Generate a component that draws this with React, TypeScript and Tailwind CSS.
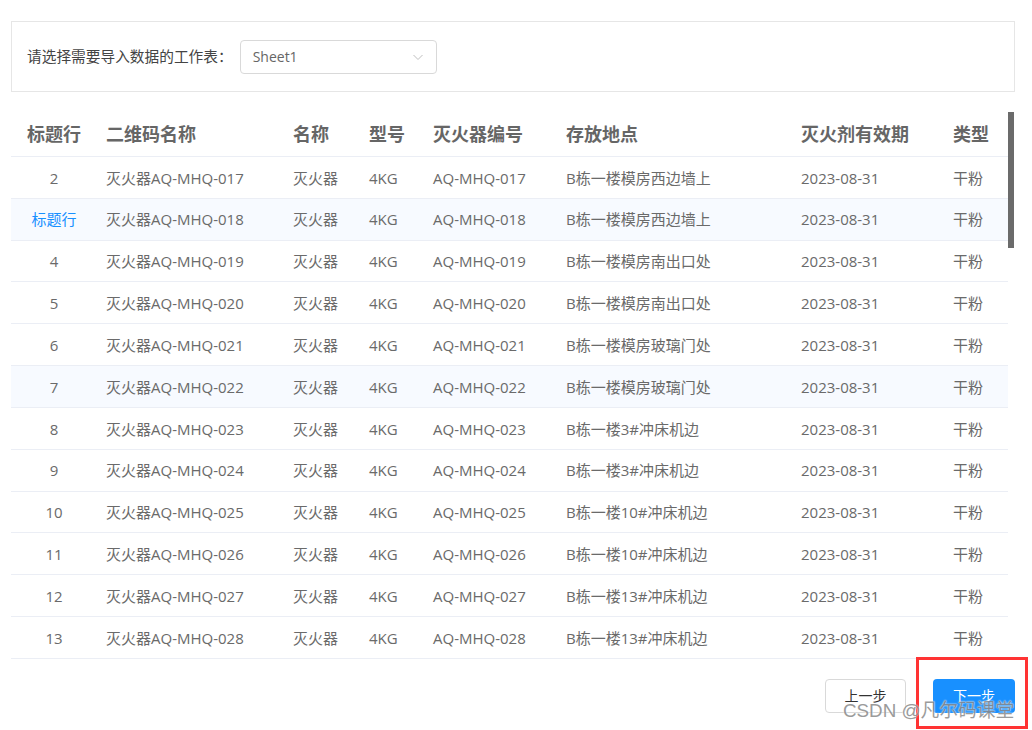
import React from "react";

const cols = [
  { w: "w-[86px]", center: true },
  { w: "w-[187px]" },
  { w: "w-[76px]" },
  { w: "w-[64px]" },
  { w: "w-[133px]" },
  { w: "w-[235px]" },
  { w: "w-[152px]" },
  { w: "w-[64px]" },
];

const headers = ["标题行", "二维码名称", "名称", "型号", "灭火器编号", "存放地点", "灭火剂有效期", "类型"];

const places = [
  "B栋一楼模房西边墙上",
  "B栋一楼模房西边墙上",
  "B栋一楼模房南出口处",
  "B栋一楼模房南出口处",
  "B栋一楼模房玻璃门处",
  "B栋一楼模房玻璃门处",
  "B栋一楼3#冲床机边",
  "B栋一楼3#冲床机边",
  "B栋一楼10#冲床机边",
  "B栋一楼10#冲床机边",
  "B栋一楼13#冲床机边",
  "B栋一楼13#冲床机边",
];

const firsts = ["2", "标题行", "4", "5", "6", "7", "8", "9", "10", "11", "12", "13"];

const rows = firsts.map((f, i) => {
  const n = String(17 + i).padStart(3, "0");
  return [f, `灭火器AQ-MHQ-${n}`, "灭火器", "4KG", `AQ-MHQ-${n}`, places[i], "2023-08-31", "干粉"];
});

export default function App() {
  return (
    <div
      className="relative w-[1032px] h-[730px] bg-white overflow-hidden"
      style={{ fontFamily: '"Open Sans", "Noto Sans CJK SC", sans-serif' }}
    >
      <div className="pt-[21px] pl-[11px]">
        {/* top card */}
        <div className="w-[1004px] h-[71px] border border-[#e6e6e6] flex items-center pl-[15px]">
          <span className="text-[14.7px] text-[#444] whitespace-nowrap">请选择需要导入数据的工作表：</span>
          <div className="ml-[7px] w-[197px] h-[34px] border border-[#d9d9d9] rounded-[4px] flex items-center justify-between pl-[12px] pr-[12px]">
            <span className="text-[14px] text-[#666]">Sheet1</span>
            <svg width="12" height="12" viewBox="0 0 12 12" fill="none">
              <path d="M1.5 4 L6 8.5 L10.5 4" stroke="#bfbfbf" strokeWidth="1" />
            </svg>
          </div>
        </div>

        {/* table */}
        <div className="relative mt-[19px] w-[997px]">
          <div className="flex h-[46px] border-b border-[#ebeef5] items-center pt-[2px]">
            {headers.map((h, i) => (
              <div
                key={i}
                className={`${cols[i].w} ${i === 0 ? "text-center" : "pl-[9px]"} text-[18px] font-bold text-[#666]`}
              >
                {h}
              </div>
            ))}
          </div>
          {rows.map((r, ri) => (
            <div
              key={ri}
              className={`flex h-[41.83px] border-b border-[#ebeef5] items-center pt-[1px] ${
                ri === 1 || ri === 5 ? "bg-[#f7faff]" : ""
              }`}
            >
              {r.map((c, ci) => (
                <div
                  key={ci}
                  className={`${cols[ci].w} ${ci === 0 ? "text-center" : "pl-[9px]"} text-[15px] whitespace-nowrap ${
                    ri === 1 && ci === 0 ? "text-[#1890ff]" : "text-[#6a6a6a]"
                  }`}
                >
                  {c}
                </div>
              ))}
            </div>
          ))}
          <div className="absolute left-[997px] top-[1px] w-[6px] h-[136px] bg-[#6b6b6b]" />
        </div>

        {/* buttons */}
        <div className="flex justify-end w-[1004px] mt-[20px] gap-[27px]">
          <button className="w-[81px] h-[34px] border border-[#d9d9d9] rounded-[4px] text-[14px] text-[#333] bg-white">
            上一步
          </button>
          <button className="w-[82px] h-[34px] rounded-[4px] text-[14px] text-white bg-[#1890ff]">
            下一步
          </button>
        </div>
      </div>

      {/* red annotation box */}
      <div className="absolute left-[916px] top-[657px] w-[112px] h-[72px] border-[3px] border-[#ff3333]" />
      {/* watermark */}
      <div
        className="absolute left-[843px] top-[697px] text-[18.8px] text-[#8a8a8a] whitespace-nowrap"
        style={{
          fontFamily: '"Liberation Sans", "Noto Sans CJK SC", sans-serif',
          textShadow: "0 0 2px #fff, 0 0 1px #fff",
          opacity: 0.85,
        }}
      >
        CSDN @凡尔码课堂
      </div>
    </div>
  );
}
